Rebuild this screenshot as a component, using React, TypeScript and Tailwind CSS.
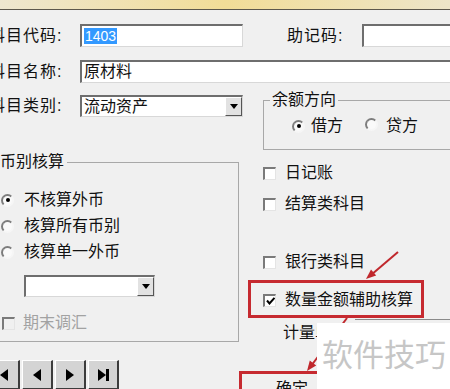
import React from "react";

// ─── classic win32 bits ───────────────────────────────────────────────────
const Field = ({ className = "", children }: { className?: string; children?: React.ReactNode }) => (
  <div
    className={`flex items-center h-[23px] shrink-0 pl-[2px] bg-white border-t-2 border-l-2 border-t-[#6e6e6e] border-l-[#6e6e6e] border-r border-b border-r-[#d8d8d8] border-b-[#d8d8d8] ${className}`}
  >
    {children}
  </div>
);

const Select = ({ value, className = "" }: { value?: string; className?: string }) => (
  <div
    className={`flex items-stretch h-[22px] shrink-0 bg-white border-t-2 border-l-2 border-t-[#6e6e6e] border-l-[#6e6e6e] border-r border-b border-r-[#d8d8d8] border-b-[#d8d8d8] ${className}`}
  >
    <span className="flex-1 pl-[2px] leading-[19px] overflow-hidden whitespace-nowrap">{value}</span>
    <span className="w-[17px] flex items-center justify-center bg-[#e2e2e2] border-t border-l border-t-white border-l-white border-r border-b border-r-[#555] border-b-[#555]">
      <svg width="8" height="5" viewBox="0 0 8 5">
        <path d="M0 0 H8 L4 5 Z" fill="#000" />
      </svg>
    </span>
  </div>
);

const Radio = ({ checked }: { checked?: boolean }) => (
  <span className="inline-flex items-center justify-center w-[13px] h-[13px] shrink-0 rounded-full bg-[#fafafa] border-2 border-t-[#7d7d7d] border-l-[#7d7d7d] border-r-[#f6f6f6] border-b-[#f6f6f6]">
    {checked && <span className="w-[4px] h-[4px] rounded-full bg-black" />}
  </span>
);

const Check = ({ checked, disabled }: { checked?: boolean; disabled?: boolean }) => (
  <span
    className={`inline-flex items-center justify-center w-[13px] h-[13px] shrink-0 border-t-2 border-l-2 border-t-[#7a7a7a] border-l-[#7a7a7a] border-r border-b border-r-[#e4e4e4] border-b-[#e4e4e4] ${
      disabled ? "bg-[#f0f0f0]" : "bg-white"
    }`}
  >
    {checked && (
      <svg width="9" height="8" viewBox="0 0 9 8">
        <path d="M1 3.5 L3.5 6.5 L8.5 0.8" stroke="#000" strokeWidth="2" fill="none" />
      </svg>
    )}
  </span>
);

const NavBtn = ({ className = "", children }: { className?: string; children: React.ReactNode }) => (
  <div
    className={`flex items-center justify-center h-[30px] bg-[#d4d4d4] border-t border-l border-t-white border-l-white border-r-2 border-b-2 border-r-[#3c3c3c] border-b-[#3c3c3c] ${className}`}
  >
    {children}
  </div>
);

// ─── dialog ───────────────────────────────────────────────────────────────
export default function App() {
  return (
    <div className="relative w-[450px] h-[389px] overflow-hidden bg-[#f0f0f0] text-[#111] text-[16px] leading-[20px] font-['Liberation_Sans','Noto_Sans_CJK_SC',sans-serif]">
      {/* title bar remnant */}
      <div className="h-[9px] bg-linear-to-r from-[#eee7cf] via-[#f2dd97] to-[#ede5c8]" />
      <div className="h-px bg-[#5d584c]" />

      {/* 科目代码 / 助记码 */}
      <div className="flex items-center h-[23px] mt-[14px] -ml-[11px]">
        <span className="w-[91px] shrink-0 tracking-[1px]">科目代码:</span>
        <Field className="w-[163px]">
          <span className="bg-[#3399ff] text-white px-[1px] text-[14px] leading-[16px] font-['Liberation_Sans',sans-serif]">
            1403
          </span>
        </Field>
        <span className="ml-[44px] w-[75px] shrink-0 tracking-[1px]">助记码:</span>
        <Field className="w-[100px]" />
      </div>

      {/* 科目名称 */}
      <div className="flex items-center h-[23px] mt-[13px] -ml-[11px]">
        <span className="w-[91px] shrink-0 tracking-[1px]">科目名称:</span>
        <Field className="w-[390px]">原材料</Field>
      </div>

      <div className="flex mt-[7px] -ml-[11px]">
        {/* left column */}
        <div className="flex flex-col w-[254px] shrink-0">
          <div className="flex items-center h-[22px] mt-[5px]">
            <span className="w-[91px] shrink-0 tracking-[1px]">科目类别:</span>
            <Select className="w-[163px]" value="流动资产" />
          </div>

          <fieldset className="ml-[5px] w-[245px] mt-[35px] pb-[8px] border border-[#a8a8a8]">
            <legend className="ml-[5px] pr-[3px] leading-[20px]">币别核算</legend>
            {[
              ["不核算外币", true],
              ["核算所有币别", false],
              ["核算单一外币", false],
            ].map(([label, on], i) => (
              <div key={i} className={`flex items-center gap-[10px] h-[26px] ml-[6px] ${i === 0 ? "mt-[15px]" : ""}`}>
                <Radio checked={on as boolean} />
                <span>{label as string}</span>
              </div>
            ))}
            <Select className="ml-[29px] mt-[10px] w-[131px]" />
            <div className="flex items-center gap-[8px] h-[20px] mt-[16px] ml-[7px]">
              <Check disabled />
              <span className="text-[#a2a2a2]">期末调汇</span>
            </div>
          </fieldset>

          <div className="flex gap-[2px] mt-[18px] -ml-[3px]">
            <NavBtn className="w-[34px]">
              <svg width="11" height="12" viewBox="0 0 11 12">
                <rect x="0" y="0" width="3" height="12" fill="#000" />
                <path d="M11 0 V12 L3 6 Z" fill="#000" />
              </svg>
            </NavBtn>
            <NavBtn className="w-[31px]">
              <svg width="8" height="12" viewBox="0 0 8 12">
                <path d="M8 0 V12 L0 6 Z" fill="#000" />
              </svg>
            </NavBtn>
            <NavBtn className="w-[31px]">
              <svg width="8" height="12" viewBox="0 0 8 12">
                <path d="M0 0 V12 L8 6 Z" fill="#000" />
              </svg>
            </NavBtn>
            <NavBtn className="w-[31px]">
              <svg width="11" height="12" viewBox="0 0 11 12">
                <path d="M0 0 V12 L8 6 Z" fill="#000" />
                <rect x="8" y="0" width="3" height="12" fill="#000" />
              </svg>
            </NavBtn>
          </div>
        </div>

        {/* right column */}
        <div className="flex flex-col ml-[20px] w-[200px] shrink-0">
          <fieldset className="w-[200px] pb-[13px] border border-[#a8a8a8]">
            <legend className="ml-[6px] px-[2px] leading-[20px]">余额方向</legend>
            <div className="flex items-center h-[20px] mt-[6px] ml-[28px]">
              <Radio checked />
              <span className="ml-[6px]">借方</span>
              <span className="ml-[22px]">
                <Radio />
              </span>
              <span className="ml-[8px]">贷方</span>
            </div>
          </fieldset>

          {[
            ["日记账", "mt-[13px]", false],
            ["结算类科目", "mt-[11px]", false],
            ["银行类科目", "mt-[38px]", false],
            ["数量金额辅助核算", "mt-[18px]", true],
          ].map(([label, mt, on]) => (
            <div key={label as string} className={`flex items-center gap-[9px] h-[20px] ${mt}`}>
              <Check checked={on as boolean} />
              <span>{label as string}</span>
            </div>
          ))}

          <div className="flex items-start h-[20px] mt-[13px]">
            <span className="ml-[20px] whitespace-nowrap">计量单位:</span>
            <div className="flex-1 -mt-[4px] ml-[4px] border-t border-[#8a8a8a]" />
          </div>

          <button className="-ml-[20px] mt-[31px] w-[98px] h-[30px] text-center leading-[20px]">确定</button>
        </div>
      </div>

      {/* annotations */}
      <div className="absolute left-[248px] top-[280px] w-[176px] h-[38px] border-[3px] border-[#c62a30]" />
      <div className="absolute left-[239px] top-[371px] w-[120px] h-[40px] border-[3px] border-[#c62a30]" />
      <svg className="absolute inset-0 pointer-events-none" width="450" height="389">
        <line x1="398" y1="252" x2="371" y2="275" stroke="#c0282d" strokeWidth="2" />
        <polygon points="366,279 376.2,275.6 371,269.4" fill="#c0282d" />
        <line x1="347" y1="318" x2="311" y2="366" stroke="#c0282d" strokeWidth="2" />
        <polygon points="307,371 316.2,365.4 309.8,360.6" fill="#c0282d" />
      </svg>

      {/* watermark */}
      <div className="absolute left-[317px] top-[323px] right-0 bottom-0 bg-white pl-[5px] pt-[14px]">
        <span className="text-[31px] leading-[32px] text-[#c6c6c6] whitespace-nowrap font-['Noto_Sans_CJK_SC',sans-serif]">
          软件技巧
        </span>
      </div>
    </div>
  );
}
